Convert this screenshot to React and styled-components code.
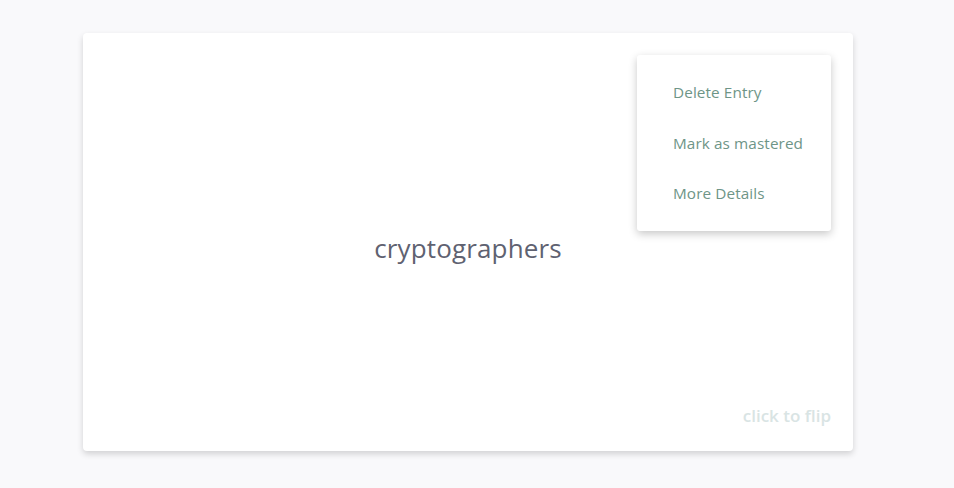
import React from 'react'
import styled, { createGlobalStyle } from 'styled-components'

const GlobalStyle = createGlobalStyle`
  html, body {
    margin: 0;
    padding: 0;
    background: #f9f9fb;
    font-family: "Open Sans", "Liberation Sans", sans-serif;
  }
`

const Page = styled.div`
  width: 954px;
  height: 488px;
  padding: 33px 0 0 83px;
  box-sizing: border-box;
`

const Card = styled.div`
  position: relative;
  width: 770px;
  height: 418px;
  background: #fff;
  border-radius: 4px;
  box-shadow: 0 3px 6px rgba(0, 0, 0, 0.16);
  display: flex;
  flex-direction: column;
  align-items: center;
  justify-content: center;
  box-sizing: border-box;
`

const Word = styled.div`
  font-size: 26px;
  color: #5f6271;
  margin-top: 12px;
  letter-spacing: 0.15px;
`

const FlipHint = styled.div`
  position: absolute;
  right: 22px;
  bottom: 24px;
  font-size: 17px;
  font-weight: 600;
  color: #d9e4e4;
`

const Menu = styled.ul`
  position: absolute;
  top: 22px;
  right: 22px;
  width: 194px;
  height: 176px;
  margin: 0;
  padding: 12px 0 0;
  list-style: none;
  background: #fff;
  border-radius: 3px;
  box-shadow: 0 3px 8px rgba(0, 0, 0, 0.22);
  box-sizing: border-box;
`

const MenuItem = styled.li`
  height: 50.5px;
  line-height: 50px;
  padding-left: 36px;
  font-size: 15.3px;
  letter-spacing: 0.1px;
  color: #6e9587;
  cursor: pointer;
`

export default function App() {
  return (
    <>
      <GlobalStyle />
      <Page>
        <Card>
          <Word>cryptographers</Word>
          <FlipHint>click to flip</FlipHint>
          <Menu>
            <MenuItem>Delete Entry</MenuItem>
            <MenuItem>Mark as mastered</MenuItem>
            <MenuItem>More Details</MenuItem>
          </Menu>
        </Card>
      </Page>
    </>
  )
}
